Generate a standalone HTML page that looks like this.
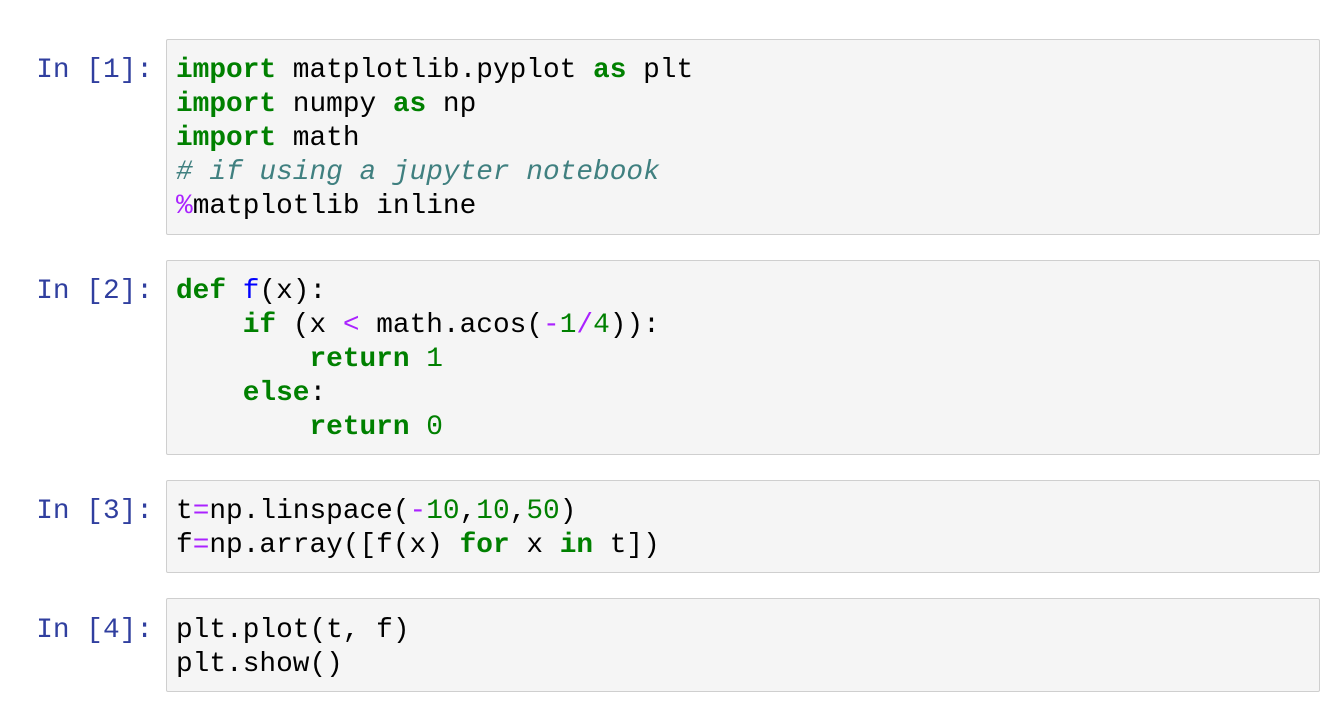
<!DOCTYPE html>
<html><head><meta charset="utf-8"><style>
html,body{margin:0;padding:0;background:#fff;width:1342px;height:714px;overflow:hidden}
.p{position:absolute;left:0;width:153px;text-align:right;font:27.8px/34px "Liberation Mono",monospace;color:#303F9F;white-space:pre}
.c{position:absolute;left:166px;width:1154px;background:#f5f5f5;border:1px solid #cfcfcf;border-radius:2px;box-sizing:border-box}
.c pre{margin:0;position:absolute;left:9px;font:27.8px/34px "Liberation Mono",monospace;color:#000}
.k{color:#008000;font-weight:bold}
.cm{color:#408080;font-style:italic}
.o{color:#AA22FF}
.n{color:#008000}
.f{color:#0000FF}
</style></head><body>
<div class="p" style="top:54px">In [1]:</div>
<div class="c" style="top:39px;height:196px"><pre style="top:14px"><span class="k">import</span> matplotlib.pyplot <span class="k">as</span> plt
<span class="k">import</span> numpy <span class="k">as</span> np
<span class="k">import</span> math
<span class="cm"># if using a jupyter notebook</span>
<span class="o">%</span>matplotlib inline</pre></div>

<div class="p" style="top:275px">In [2]:</div>
<div class="c" style="top:260px;height:195px"><pre style="top:14px"><span class="k">def</span> <span class="f">f</span>(x):
    <span class="k">if</span> (x <span class="o">&lt;</span> math.acos(<span class="o">-</span><span class="n">1</span><span class="o">/</span><span class="n">4</span>)):
        <span class="k">return</span> <span class="n">1</span>
    <span class="k">else</span>:
        <span class="k">return</span> <span class="n">0</span></pre></div>

<div class="p" style="top:495px">In [3]:</div>
<div class="c" style="top:480px;height:93px"><pre style="top:14px">t<span class="o">=</span>np.linspace(<span class="o">-</span><span class="n">10</span>,<span class="n">10</span>,<span class="n">50</span>)
f<span class="o">=</span>np.array([f(x) <span class="k">for</span> x <span class="k">in</span> t])</pre></div>

<div class="p" style="top:614px">In [4]:</div>
<div class="c" style="top:598px;height:94px"><pre style="top:15px">plt.plot(t, f)
plt.show()</pre></div>
</body></html>
